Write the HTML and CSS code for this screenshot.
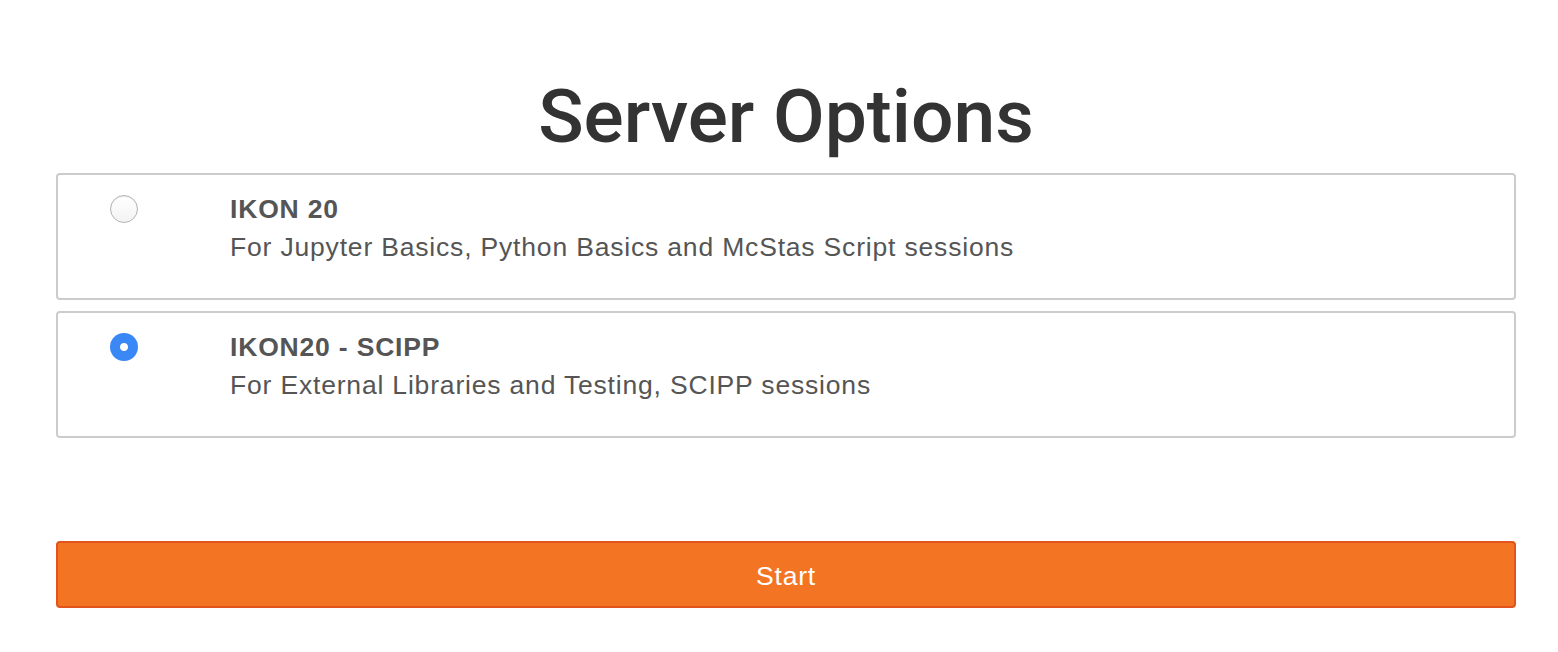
FILE: index.html
```html
<!DOCTYPE html>
<html lang="en">
<head>
<meta charset="utf-8">
<title>Server Options</title>
<link rel="stylesheet" href="styles.css">
</head>
<body>
<main class="page">
  <h1 class="title">Server Options</h1>
  <form class="options">
    <label class="card">
      <span class="radio"></span>
      <span class="text">
        <strong class="name">IKON 20</strong>
        <span class="desc">For Jupyter Basics, Python Basics and McStas Script sessions</span>
      </span>
    </label>
    <label class="card">
      <span class="radio checked"></span>
      <span class="text">
        <strong class="name">IKON20 - SCIPP</strong>
        <span class="desc">For External Libraries and Testing, SCIPP sessions</span>
      </span>
    </label>
    <button type="button" class="start">Start</button>
  </form>
</main>
</body>
</html>
```

FILE: styles.css
```css
html, body {
  margin: 0;
  padding: 0;
  background: #ffffff;
}

body {
  font-family: "Liberation Sans", Arial, Helvetica, sans-serif;
  color: #555555;
}

.page {
  width: 1460px;
  padding: 75px 0 0 56px;
}

.title {
  margin: 0 0 16px 0;
  font-family: Roboto, "Liberation Sans", Arial, sans-serif;
  font-size: 75px;
  line-height: 82px;
  font-weight: 500;
  color: #333333;
  text-align: center;
}

.options {
  display: flex;
  flex-direction: column;
}

.card {
  display: grid;
  grid-template-columns: 28px 1fr;
  column-gap: 92px;
  align-items: start;
  border: 2px solid #cccccc;
  border-radius: 4px;
  padding: 15px 20px 32px 52px;
  margin-bottom: 11px;
}

.radio {
  display: block;
  box-sizing: border-box;
  width: 28px;
  height: 28px;
  margin-top: 5px;
  border-radius: 50%;
  border: 1.5px solid #b3b3b3;
  background: linear-gradient(#ffffff, #f3f3f3);
  box-shadow: inset 0 1px 1px rgba(0, 0, 0, 0.08);
}

.radio.checked {
  border: none;
  background: radial-gradient(circle, #ffffff 0, #ffffff 3.5px, #3a87f6 4.5px);
  box-shadow: none;
}

.text {
  display: flex;
  flex-direction: column;
  font-size: 26.5px;
  line-height: 38px;
  letter-spacing: 0.82px;
}

.name {
  font-weight: 700;
  color: #555555;
}

.desc {
  color: #555555;
}

.start {
  margin-top: 92px;
  height: 67px;
  border: 2px solid #e2531d;
  border-radius: 4px;
  background: #f37524;
  color: #ffffff;
  font-family: "Liberation Sans", Arial, Helvetica, sans-serif;
  font-size: 26.5px;
  letter-spacing: 0.8px;
  padding: 3px 0 0 0;
  cursor: pointer;
}
```
